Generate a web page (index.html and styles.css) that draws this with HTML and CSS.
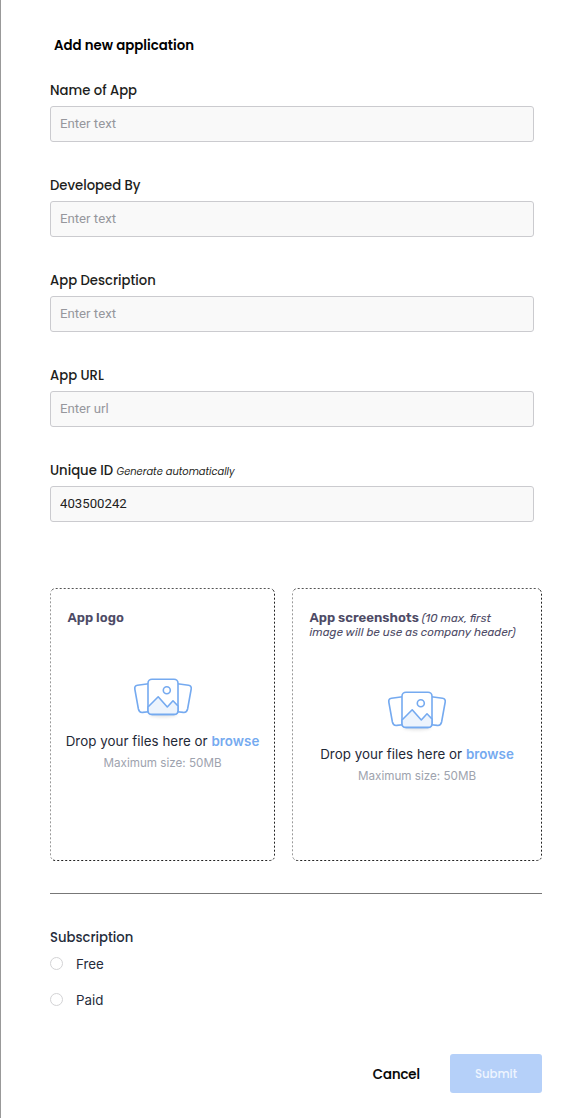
FILE: index.html
```html
<!DOCTYPE html>
<html lang="en">
<head>
<meta charset="utf-8">
<title>Add new application</title>
<link rel="stylesheet" href="styles.css">
</head>
<body>
<svg class="defs" width="0" height="0" aria-hidden="true">
  <symbol id="pictures" viewBox="0 0 60 42">
    <ellipse class="shadow" cx="30" cy="36.5" rx="14" ry="3"/>
    <path class="sheet" d="M15.5 5.7 L4.5 7.2 Q1.3 7.8 1.8 11 L5.4 31 Q6.3 34.9 9.8 34.4 L15.5 33.7"/>
    <path class="sheet" d="M44.5 5.7 L55.5 7.2 Q58.7 7.8 58.2 11 L54.6 31 Q53.7 34.9 50.2 34.4 L44.5 33.7"/>
    <rect class="sheet" x="15" y="1.2" width="30" height="35.2" rx="4"/>
    <path class="hills" d="M15 29 L25.2 18.8 L34.3 29 L40 22.8 L45 28 V32.4 Q45 36.4 41 36.4 H19 Q15 36.4 15 32.4 Z"/>
    <circle class="sheet" cx="33.8" cy="12.3" r="3.5"/>
  </symbol>
</svg>
<main class="page">
  <h1 class="title">Add new application</h1>
  <form class="form">
    <div class="field"><label class="label">Name of App</label><input class="input" placeholder="Enter text"></div>
    <div class="field"><label class="label">Developed By</label><input class="input" placeholder="Enter text"></div>
    <div class="field"><label class="label">App Description</label><input class="input" placeholder="Enter text"></div>
    <div class="field"><label class="label">App URL</label><input class="input" placeholder="Enter url"></div>
    <div class="field"><label class="label">Unique ID <em class="hint">Generate automatically</em></label><input class="input" value="403500242"></div>

    <div class="uploads">
      <section class="drop logo">
        <svg class="outline" width="225" height="273">
          <path class="edge-top" d="M2 2 Q3.5 .5 5.5 .5 H219.5 Q222 .5 223 2"/>
          <path class="edge" d="M223 2 Q224.5 3.5 224.5 5.5 V267.5 Q224.5 272.5 219.5 272.5 H5.5 Q3 272.5 2 271"/>
          <path class="edge-left" d="M2 271 Q.5 269.5 .5 267.5 V5.5 Q.5 3.5 2 2"/>
        </svg>
        <p class="drop-title"><b>App logo</b></p>
        <div class="drop-body">
          <svg class="icon"><use href="#pictures"/></svg>
          <p class="drop-text">Drop your files here or <a class="browse">browse</a></p>
          <p class="drop-size">Maximum size: 50MB</p>
        </div>
      </section>
      <section class="drop shots">
        <svg class="outline" width="250" height="273">
          <path class="edge-top" d="M2 2 Q3.5 .5 5.5 .5 H244.5 Q247 .5 248 2"/>
          <path class="edge" d="M248 2 Q249.5 3.5 249.5 5.5 V267.5 Q249.5 272.5 244.5 272.5 H5.5 Q3 272.5 2 271"/>
          <path class="edge-left" d="M2 271 Q.5 269.5 .5 267.5 V5.5 Q.5 3.5 2 2"/>
        </svg>
        <p class="drop-title"><b>App screenshots</b> <em>(10 max, first<br>image will be use as company header)</em></p>
        <div class="drop-body">
          <svg class="icon"><use href="#pictures"/></svg>
          <p class="drop-text">Drop your files here or <a class="browse">browse</a></p>
          <p class="drop-size">Maximum size: 50MB</p>
        </div>
      </section>
    </div>

    <hr class="rule">

    <div class="subscription">
      <p class="sub-title">Subscription</p>
      <label class="option"><span class="radio"></span>Free</label>
      <label class="option"><span class="radio"></span>Paid</label>
    </div>

    <div class="actions">
      <button type="button" class="cancel">Cancel</button>
      <button type="button" class="submit">Submit</button>
    </div>
  </form>
</main>
</body>
</html>
```
FILE: styles.css
```css
* { box-sizing: border-box; }
body { margin: 0; background: #fff; font-family: Poppins, Inter, sans-serif; }
p, h1 { margin: 0; }
.defs { display: block; }
.page { width: 586px; height: 1118px; border-left: 1px solid #999; padding: 34px 44px 0 49px; overflow: hidden; }
.title { height: 22px; padding-left: 4px; font: 600 13.33px/23px Poppins, Inter, sans-serif; color: #000; }
.form { padding-top: 24px; }
.field { width: 484px; height: 95px; }
.label { display: block; height: 26px; line-height: 21px; font-size: 13.2px; font-weight: 500; color: #1d1e20; white-space: nowrap; }
.hint { font-size: 9.9px; font-weight: 400; }
.input { display: block; width: 484px; height: 36px; border: 1px solid #cbcbcf; border-radius: 3px; background: #f9f9f9; padding: 0 9px 1px; font: 400 13.2px/20px Roboto, sans-serif; color: #222; outline: none; }
.input::placeholder { color: #96979d; opacity: 1; }
.uploads { display: flex; gap: 17px; margin-top: 33px; }
.drop { position: relative; height: 273px; padding-top: 23px; }
.logo { width: 225px; }
.shots { width: 250px; }
.outline { position: absolute; left: 0; top: 0; }
.outline path { fill: none; stroke-width: 1; stroke-dasharray: 2 2; }
.edge { stroke: #222; }
.edge-top { stroke: #555; }
.edge-left { stroke: #999; }
.drop-title { padding-left: 17.5px; font: 400 11.67px/14px Rubik, Inter, sans-serif; color: #4e4b66; white-space: nowrap; }
.drop-title b { font-size: 13.2px; font-weight: 600; }
.drop-body { display: flex; flex-direction: column; align-items: center; }
.logo .drop-body { padding-top: 52.5px; }
.shots .drop-body { padding-top: 51.5px; }
.icon { width: 60px; height: 42px; overflow: visible; }
.sheet { fill: #fff; stroke: #75aaf0; stroke-width: 1.6; stroke-linejoin: round; }
.hills { fill: #edf4fd; stroke: #75aaf0; stroke-width: 1.6; stroke-linejoin: round; }
.shadow { fill: #e6e6e6; filter: blur(1.5px); }
.drop-text { margin-top: 11.5px; font-family: Inter, sans-serif; font-size: 13.33px; line-height: 20px; letter-spacing: .04px; color: #1f2937; white-space: nowrap; }
.browse { color: #75aaf0; font-weight: 600; }
.drop-size { margin-top: 3px; font-family: Inter, sans-serif; font-size: 11.67px; line-height: 18px; color: #9ea3ae; }
.rule { width: 492px; height: 1px; margin: 32px 0 0; border: 0; background: #777; }
.subscription { padding-top: 33px; color: #252c3b; }
.sub-title { height: 18px; font-size: 13.2px; line-height: 21px; font-weight: 500; }
.option { display: flex; align-items: center; gap: 13px; height: 36px; font-family: Inter, sans-serif; font-size: 13.33px; padding-top: 1px; }
.radio { width: 13px; height: 13px; margin-top: -1px; border: 1px solid #d3d3d5; border-radius: 50%; }
.actions { display: flex; justify-content: flex-end; gap: 30px; margin-top: 37px; width: 492px; }
.actions button { border: 0; padding: 2px 0 0; height: 39px; font-family: Poppins, Inter, sans-serif; }
.actions .cancel { background: none; font-size: 13.2px; font-weight: 500; color: #000; -webkit-text-stroke: .2px #000; }
.actions .submit { width: 92px; background: #b5d0f9; border-radius: 3px; color: #eff5ff; font-size: 11.67px; font-weight: 500; }
```
